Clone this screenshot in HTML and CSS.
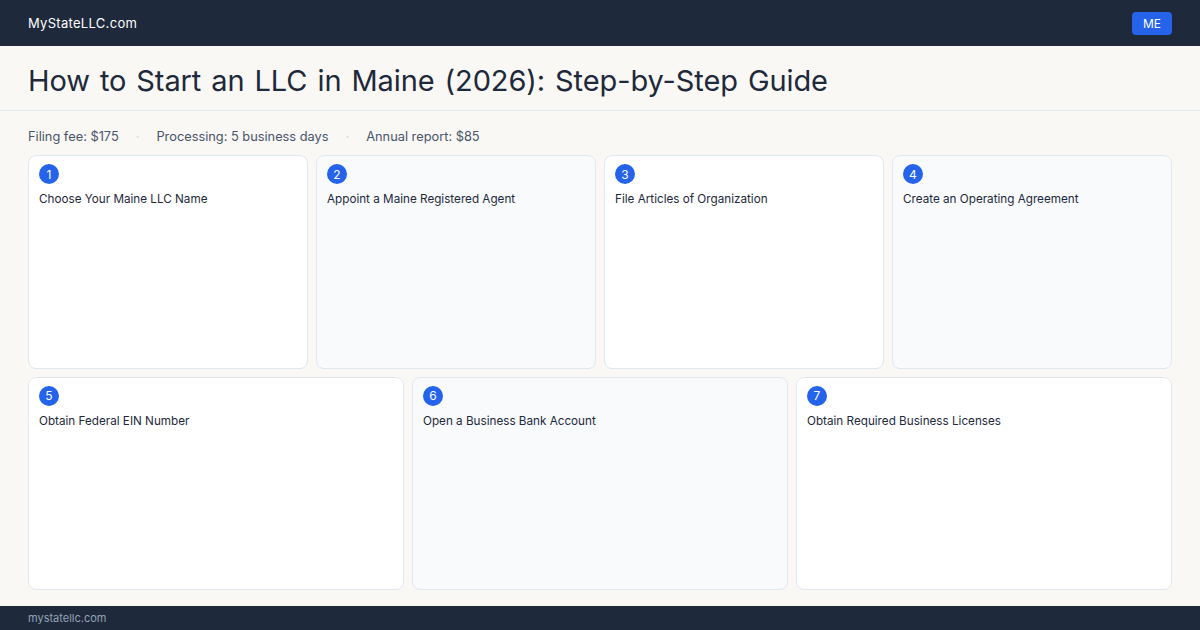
FILE: index.html
```html
<!DOCTYPE html>
<html>
<head>
    <title>How to Start an LLC in Maine</title>
    <link rel="stylesheet" href="styles.css">
</head>
<body>
    <header class="topbar">
        <span class="logo">MyStateLLC.com</span>
        <span class="state-badge">ME</span>
    </header>

    <div class="title-bar">
        <h1>How to Start an LLC in Maine (2026): Step-by-Step Guide</h1>
    </div>

    <main class="content">
        <div class="facts">
            <span>Filing fee: $175</span>
            <span class="dot">·</span>
            <span>Processing: 5 business days</span>
            <span class="dot">·</span>
            <span>Annual report: $85</span>
        </div>

        <div class="steps row-four">
            <div class="step"><span class="num">1</span><div class="step-title">Choose Your Maine LLC Name</div></div>
            <div class="step alt"><span class="num">2</span><div class="step-title">Appoint a Maine Registered Agent</div></div>
            <div class="step"><span class="num">3</span><div class="step-title">File Articles of Organization</div></div>
            <div class="step alt"><span class="num">4</span><div class="step-title">Create an Operating Agreement</div></div>
        </div>
        <div class="steps row-three">
            <div class="step"><span class="num">5</span><div class="step-title">Obtain Federal EIN Number</div></div>
            <div class="step alt"><span class="num">6</span><div class="step-title">Open a Business Bank Account</div></div>
            <div class="step"><span class="num">7</span><div class="step-title">Obtain Required Business Licenses</div></div>
        </div>
    </main>

    <footer class="footer">mystatellc.com</footer>
</body>
</html>
```

FILE: styles.css
```css
body { margin: 0; font-family: Inter, "Noto Sans", sans-serif; background: #faf8f5; color: #1e293b; height: 630px; display: flex; flex-direction: column; overflow: hidden; }
.topbar { height: 46px; background: #1e293b; display: flex; align-items: center; justify-content: space-between; padding: 0 28px; box-sizing: border-box; flex-shrink: 0; }
.logo { color: #fff; font-size: 13px; letter-spacing: 0.3px; }
.state-badge { background: #2563eb; color: #fff; font-size: 12px; padding: 0 11px; height: 23px; line-height: 23px; border-radius: 4px; }
.title-bar { height: 65px; display: flex; align-items: center; padding: 5px 28px 0; box-sizing: border-box; border-bottom: 1px solid #e2e8f0; flex-shrink: 0; }
h1 { margin: 0; font-size: 29px; font-weight: 400; letter-spacing: -0.1px; word-spacing: 2px; }
.content { flex: 1; display: flex; flex-direction: column; gap: 8px; padding: 15px 28px 16px; min-height: 0; }
.facts { font-size: 12.8px; color: #475569; display: flex; gap: 17px; height: 21px; align-items: center; }
.dot { color: #cbd5e1; }
.steps { display: grid; gap: 8px; flex: 1; }
.row-four { grid-template-columns: repeat(4, 1fr); }
.row-three { grid-template-columns: repeat(3, 1fr); }
.step { background: #fff; border: 1px solid #e2e8f0; border-radius: 8px; padding: 8px 10px; }
.step.alt { background: #f8fafc; }
.num { display: flex; width: 20px; height: 20px; border-radius: 50%; background: #2563eb; color: #fff; font-size: 12px; align-items: center; justify-content: center; }
.step-title { font-size: 11.7px; margin-top: 8px; }
.footer { height: 24px; background: #1e293b; color: #94a3b8; font-size: 11px; padding: 0 28px; display: flex; align-items: center; flex-shrink: 0; }
```
